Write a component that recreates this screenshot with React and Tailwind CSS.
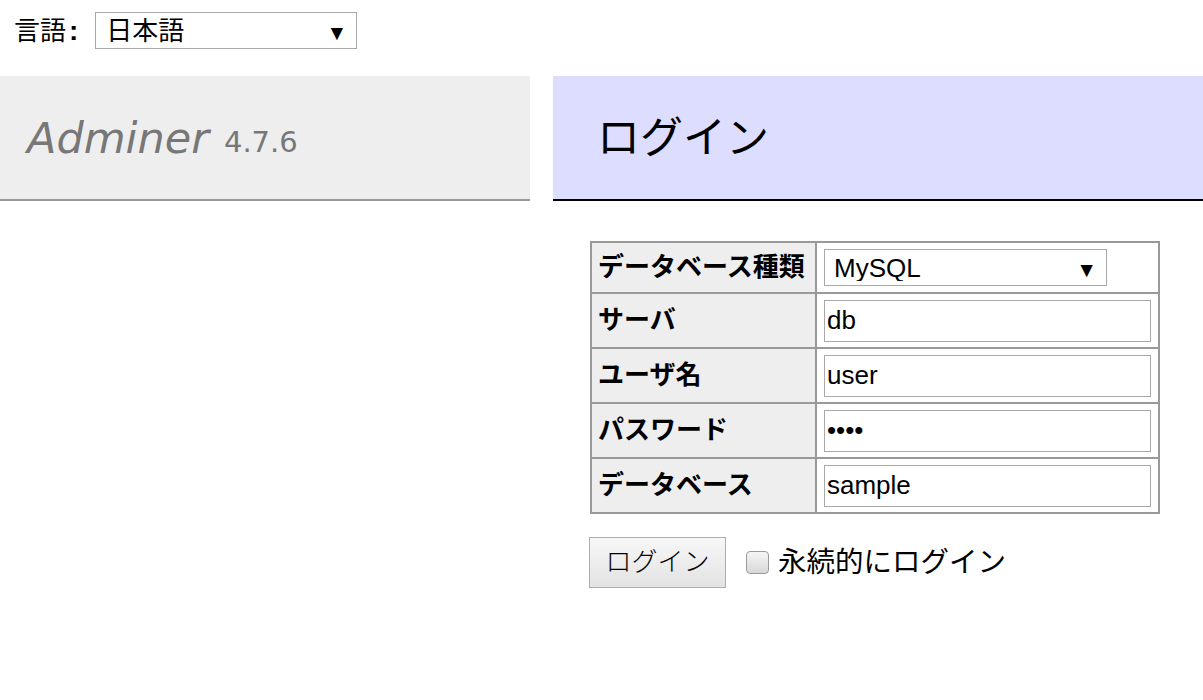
import { useState } from 'react'

const FIELDS = [
  { label: 'サーバ', value: 'db', type: 'text' },
  { label: 'ユーザ名', value: 'user', type: 'text' },
  { label: 'パスワード', value: 'pass', type: 'password' },
  { label: 'データベース', value: 'sample', type: 'text' },
]

function Field({ label, value, type }) {
  const [v, setV] = useState(value)
  return (
    <div className="flex border-t-2 border-[#999] h-[55px]">
      <div className="w-[223px] bg-[#eee] pl-[6px] flex items-center font-bold text-[26px] text-black">
        {label}
      </div>
      <div className="flex-1 border-l-2 border-[#999] flex items-center px-[7px]">
        <input
          type={type}
          value={v}
          onChange={e => setV(e.target.value)}
          className="w-full h-[42px] border border-[#a9a9a9] px-[2px] text-[26px] text-black outline-none bg-white"
        />
      </div>
    </div>
  )
}

export default function App() {
  const [lang, setLang] = useState('ja')
  const [driver, setDriver] = useState('server')

  return (
    <div className="w-[1203px] h-[700px] bg-white text-black font-['Liberation_Sans','Noto_Sans_CJK_JP',sans-serif] overflow-hidden">
      {/* language switcher */}
      <div className="flex items-start pl-[14px] pt-[12px] h-[76px]">
        <span className="text-[26px] leading-[37px] mr-[17px]">言語<span className="text-[28px] font-bold ml-[3px]">:</span></span>
        <div className="relative">
          <select
            value={lang}
            onChange={e => setLang(e.target.value)}
            className="appearance-none w-[262px] h-[37px] border border-[#a9a9a9] bg-white pl-[10px] text-[26px] leading-none outline-none"
          >
            <option value="ja">日本語</option>
          </select>
          <span className="absolute right-[10px] top-[5px] text-[21px] pointer-events-none">▼</span>
        </div>
      </div>

      {/* headers */}
      <div className="flex">
        <div className="w-[530px] h-[125px] bg-[#eee] border-b-2 border-[#999] flex items-center pl-[27px] pt-[2px] text-[#777] font-['DejaVu_Sans',Verdana,sans-serif]">
          <span className="italic text-[43px]">Adminer</span>
          <span className="text-[29px] ml-[15px] mt-[8px]">4.7.6</span>
        </div>
        <div className="ml-[23px] flex-1 h-[125px] bg-[#ddf] border-b-2 border-black flex items-center pl-[44px] pt-[2px]">
          <h2 className="text-[43px] font-normal">ログイン</h2>
        </div>
      </div>

      {/* login form */}
      <form className="ml-[590px] mt-[40px]" onSubmit={e => e.preventDefault()}>
        <div className="w-[570px] border-2 border-t-0 border-[#999]">
          <div className="flex border-t-2 border-[#999] h-[51px]">
            <div className="w-[223px] bg-[#eee] pl-[6px] flex items-center font-bold text-[26px]">
              データベース種類
            </div>
            <div className="flex-1 border-l-2 border-[#999] flex items-center px-[7px]">
              <div className="relative">
                <select
                  value={driver}
                  onChange={e => setDriver(e.target.value)}
                  className="appearance-none w-[283px] h-[37px] border border-[#a9a9a9] bg-white pl-[9px] text-[26px] leading-none outline-none"
                >
                  <option value="server">MySQL</option>
                </select>
                <span className="absolute right-[10px] top-[5px] text-[21px] pointer-events-none">▼</span>
              </div>
            </div>
          </div>
          {FIELDS.map(f => (
            <Field key={f.label} {...f} />
          ))}
        </div>

        <div className="flex items-center mt-[23px] -ml-[1px]">
          <button
            type="submit"
            className="w-[137px] h-[51px] border border-[#adadad] bg-linear-to-b from-[#f7f7f7] to-[#e3e3e3] text-[26px] font-light text-black"
          >
            ログイン
          </button>
          <label className="flex items-center ml-[20px] text-[28.5px]">
            <span className="w-[23px] h-[23px] rounded-[4px] border border-[#9a9a9a] bg-linear-to-b from-[#f5f5f5] to-[#d8d8d8] mr-[9px]" />
            永続的にログイン
          </label>
        </div>
      </form>
    </div>
  )
}
